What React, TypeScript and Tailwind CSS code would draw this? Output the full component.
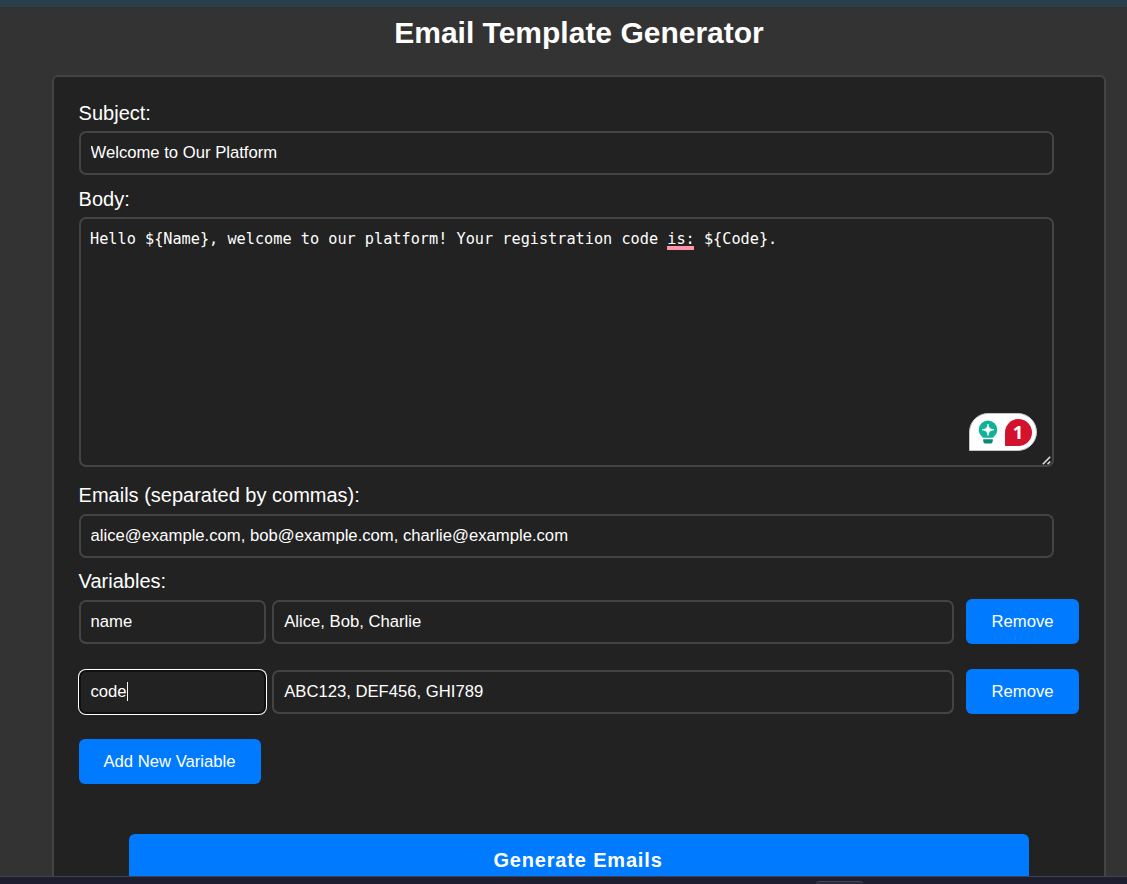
import React from "react";

const fieldBase =
  "block h-11 rounded-[7px] border-2 border-[#444] bg-[#222] pr-2 pb-px text-[16.667px] text-white outline-none";

function Label({ children }: { children: React.ReactNode }) {
  return <label className="-ml-[0.4px] block h-[29px] text-[20px] leading-[23px] text-white">{children}</label>;
}

function RemoveButton() {
  return (
    <button
      type="button"
      className="ml-3 h-[45px] w-[113px] rounded-[6px] bg-[#007bff] text-[16.667px] leading-[19px] text-white"
    >
      Remove
    </button>
  );
}

function SuggestionBadge() {
  return (
    <div className="absolute top-[194px] left-[888px] flex h-[38px] w-[68px] items-center rounded-[19px] rounded-bl-none border border-[#c3c4cc] bg-white pl-[8px]">
      <svg width="20" height="25" viewBox="0 0 20 25" className="shrink-0">
        <path
          d="M10 .5A9.3 9.3 0 0 0 .7 9.800c0 3.100 1.700 5.100 3.300 6.900.5.8 1 1.100 1.900 1.100h8.200c.9 0 1.400-.3 1.900-1.100 1.600-1.800 3.300-3.800 3.300-6.900A9.300 9.300 0 0 0 10 .5Z"
          fill="#12b296"
        />
        <path d="M10 4c.9 4.200 1.600 4.900 5.900 5.800-4.300.9-5 1.600-5.900 5.800-.9-4.200-1.600-4.900-5.900-5.800C8.400 8.900 9.100 8.200 10 4Z" fill="#fff" stroke="#fff" strokeWidth=".7" />
        <path d="M5.200 19.200h9.600v1.500c0 1.900-1.200 2.900-2.900 2.900H8.100c-1.700 0-2.900-1-2.900-2.900Z" fill="#078b78" />
      </svg>
      <span className="ml-[7px] flex h-[27px] w-[27px] items-center justify-center rounded-[14px] rounded-bl-none bg-[#d3122e] pr-px font-['Open_Sans',sans-serif] text-[18.5px] leading-[20px] font-bold text-white">
        1
      </span>
    </div>
  );
}

export default function App() {
  return (
    <div className="flex h-[884px] w-full flex-col overflow-hidden bg-[#333] font-['Liberation_Sans',Arial,sans-serif] text-white">
      <div className="h-[7px] shrink-0 bg-[#2b3f4b]" />
      <main className="h-[869px] shrink-0 overflow-hidden pl-[52px]">
        <h1 className="h-[68px] w-[1054px] pt-[8px] text-center text-[30px] leading-[36px] font-bold">
          Email Template Generator
        </h1>
        <form className="h-[1000px] w-[1054px] rounded-[6px] border-2 border-[#444] bg-[#222] px-[25px] pt-[25px]">
          <Label>Subject:</Label>
          <input className={`${fieldBase} w-[975px] pl-[9.5px]`} defaultValue="Welcome to Our Platform" />

          <div className="h-[13px]" />
          <Label>Body:</Label>
          <div className="relative h-[250px] w-[975px] rounded-[7px] border-2 border-[#444] bg-[#222] px-[9px] pt-[10px] font-['DejaVu_Sans_Mono',monospace] text-[15.22px] leading-[20px] whitespace-pre">
            {"Hello ${Name}, welcome to our platform! Your registration code "}
            <span className="relative">
              is:
              <span className="absolute right-px bottom-[-2px] left-0 h-[4px] bg-[#ff94ab]" />
            </span>
            {" ${Code}."}
            <SuggestionBadge />
            <svg className="absolute right-[1px] bottom-0" width="9" height="9" viewBox="0 0 9 9">
              <path d="M.8 8.200 8.200.8M5.500 8.200 8.200 5.500" stroke="#ddd" strokeWidth="1.6" fill="none" />
            </svg>
          </div>

          <div className="h-[17px]" />
          <Label>Emails (separated by commas):</Label>
          <div className="h-px" />
          <input
            className={`${fieldBase} w-[975px] pl-[9.5px]`}
            defaultValue="alice@example.com, bob@example.com, charlie@example.com"
          />

          <div className="h-[12px]" />
          <Label>Variables:</Label>
          <div className="flex h-[45px] items-end">
            <input className={`${fieldBase} mr-[6px] w-[187px] pl-[9.5px]`} defaultValue="name" />
            <input className={`${fieldBase} w-[682px] pl-[10.2px]`} defaultValue="Alice, Bob, Charlie" />
            <RemoveButton />
          </div>
          <div className="mt-[25px] flex h-[45px] items-end">
            <div className="mr-[6px] flex h-11 w-[187px] items-center rounded-[7px] border-2 border-[#101010] bg-[#222] pb-px pl-[9.5px] text-[16.667px] ring-1 ring-white">
              code
              <span className="h-[19px] w-px bg-white" />
            </div>
            <input className={`${fieldBase} w-[682px] pl-[10.2px]`} defaultValue="ABC123, DEF456, GHI789" />
            <RemoveButton />
          </div>

          <button
            type="button"
            className="mt-[25px] block h-[45px] w-[182px] rounded-[6px] bg-[#007bff] pr-px text-[16.667px] leading-[19px]"
          >
            Add New Variable
          </button>
          <button
            type="button"
            className="mx-auto mt-[50px] block h-[52px] w-[900px] rounded-[6px] bg-[#007bff] pr-[2px] text-[20px] leading-[23px] font-bold tracking-[0.83px]"
          >
            Generate Emails
          </button>
        </form>
      </main>
      <footer className="h-[8px] shrink-0 border-t border-[#414250] bg-[#1d1e30] pt-[4px] pl-[816px]">
        <div className="h-[3px] w-[47px] rounded-t-[3px] border-t border-[#44455a] bg-[#28293a]" />
      </footer>
    </div>
  );
}
